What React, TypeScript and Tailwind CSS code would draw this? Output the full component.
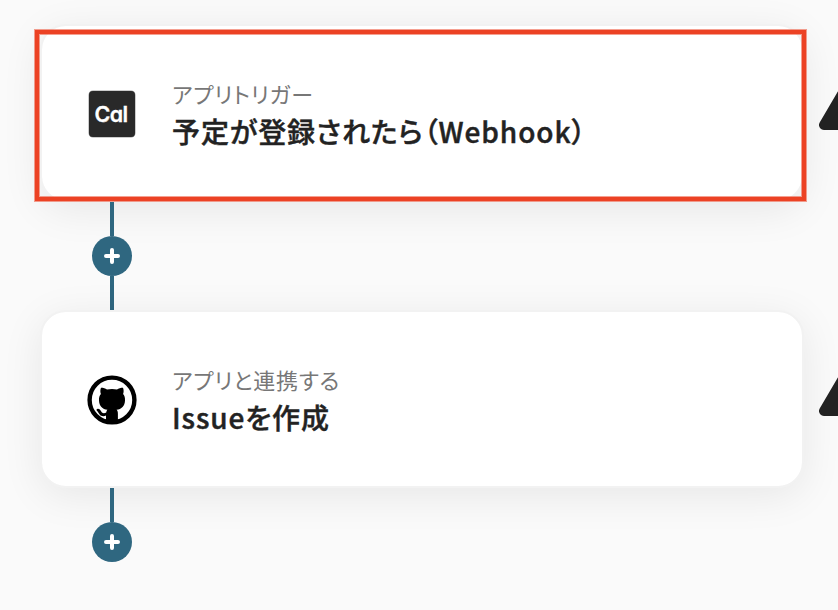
import React from "react";

function CalIcon() {
  return (
    <div className="flex h-[46px] w-[46px] items-center justify-center rounded-[4px] bg-[#292929] pt-[2px] pr-[2px] font-['Inter','Lato',sans-serif] text-[21.5px] leading-none font-semibold tracking-[-0.7px] text-white shadow-[0_0_0_0.5px_#999] [font-feature-settings:'cv11'] [-webkit-text-stroke:0.3px_#fff]">
      Cal
    </div>
  );
}

function GithubIcon() {
  return (
    <svg viewBox="0 0 50 50" className="h-[50px] w-[50px]">
      <circle cx="25" cy="25" r="22.4" fill="#fff" stroke="#000" strokeWidth="4.4" />
      <path
        fill="#000"
        d="M19 47V40.5C17 41.6 13.8 41.4 12.5 39.2C11.5 37.5 10.8 36.5 9.7 35.4C9.3 34.6 9.8 33.8 10.8 33.8C13 33.8 13.7 35.8 14.7 37.2C16 38.7 18 38.2 19.2 37.6C19.4 36.2 19.8 35.6 20.4 34.8C15.5 34 12.2 31 12 25.4C11.8 22.9 12.5 20.7 13.9 19.1C13.1 17 13.2 14.9 14 12.8C16.4 12.8 18.3 13.4 20 14.4C23.2 13.7 26.8 13.7 30 14.4C31.7 13.4 33.6 12.8 36 12.8C36.8 14.9 36.9 17 36.1 19.1C37.5 20.7 38.2 22.9 38 25.4C37.8 31 34.5 34 29.6 34.8C30.6 35.8 30.9 37 30.9 39V47Z"
      />
    </svg>
  );
}

function StepCard({ icon, label, title }: { icon: React.ReactNode; label: string; title: string }) {
  return (
    <section className="relative flex h-[178px] w-[764px] items-center rounded-[26px] border-2 border-[#f2f2f2] bg-white bg-clip-padding pt-px pl-[45px] shadow-[0_8px_40px_rgba(0,0,0,0.08)]">
      <div className="flex w-[50px] items-center justify-center">{icon}</div>
      <div className="ml-[35px] pt-px whitespace-nowrap [font-feature-settings:'palt']">
        <p className="text-[22px] leading-[32px] tracking-[0.8px] text-[#777]">{label}</p>
        <p className="mt-px text-[28px] leading-[42px] font-medium tracking-[0.92px] text-[#222] [-webkit-text-stroke:0.45px_#222]">
          {title}
        </p>
      </div>
      <svg viewBox="0 0 70 60" className="absolute top-[44px] left-[776px] h-[60px] w-[70px]">
        <path d="M35 5.5L6 55H64Z" fill="#222" stroke="#222" strokeWidth="10" strokeLinejoin="round" />
      </svg>
    </section>
  );
}

function AddStep({ last = false }: { last?: boolean }) {
  return (
    <div className="relative ml-[52px] flex w-10 flex-col items-center">
      <div className="h-[34px] w-1 bg-[#2f6780]" />
      <button aria-label="+" className="flex h-10 w-10 items-center justify-center rounded-full bg-[#2f6780]">
        <svg viewBox="0 0 16 16" className="h-4 w-4">
          <path d="M8 2V14M2 8H14" stroke="#fff" strokeWidth="4" strokeLinecap="round" />
        </svg>
      </button>
      {!last && <div className="h-[34px] w-1 bg-[#2f6780]" />}
    </div>
  );
}

export default function App() {
  return (
    <main className="relative h-[610px] w-[838px] overflow-hidden bg-[#fafafa] pt-6 pl-10 font-['Noto_Sans_CJK_JP',sans-serif]">
      <StepCard icon={<CalIcon />} label="アプリトリガー" title="予定が登録されたら（Webhook）" />
      <AddStep />
      <StepCard icon={<GithubIcon />} label="アプリと連携する" title="Issueを作成" />
      <AddStep last />
      <div className="absolute top-[30px] left-[35px] h-[171px] w-[771px] border-4 border-[#ec4224] shadow-[inset_0_0_0_1px_rgba(236,66,36,0.5),0_0_0_1px_rgba(236,66,36,0.5)]" />
    </main>
  );
}
